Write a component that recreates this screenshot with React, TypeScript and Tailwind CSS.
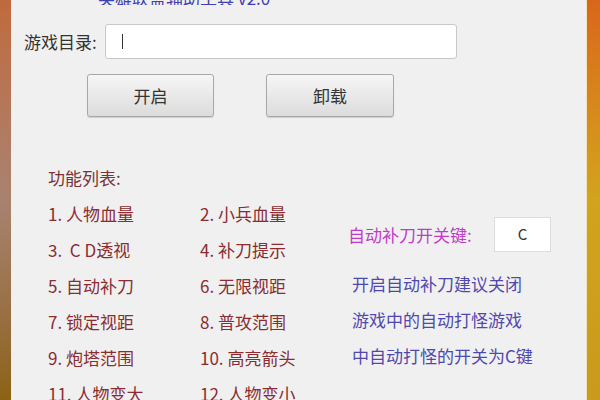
import React from 'react'

const cn = '"Noto Sans CJK SC", "Liberation Sans", sans-serif'

const features: [string, string][] = [
  ['1. 人物血量', '2. 小兵血量'],
  ['3.  C D透视', '4. 补刀提示'],
  ['5. 自动补刀', '6. 无限视距'],
  ['7. 锁定视距', '8. 普攻范围'],
  ['9. 炮塔范围', '10. 高亮箭头'],
  ['11. 人物变大', '12. 人物变小'],
]

const tips = ['开启自动补刀建议关闭', '游戏中的自动打怪游戏', '中自动打怪的开关为C键']

const App = () => {
  return (
    <div className="w-[600px] h-[400px] flex overflow-hidden" style={{ fontFamily: cn }}>
      {/* left frame */}
      <div className="w-[11px] h-full shrink-0 bg-gradient-to-b from-[#c06a3c] via-[#a88270] to-[#8c6210]" />
      <div className="w-[1px] h-full shrink-0 bg-[#f6ece4]" />

      {/* client area */}
      <div className="flex-1 h-full bg-[#f0f0f0] overflow-hidden">
        <div className="h-[5px] overflow-hidden pl-[86px]">
          <div className="-mt-[11px] text-[17px] leading-[18px] text-[#4040b0] whitespace-nowrap">
            英雄联盟辅助工具 v2.0
          </div>
        </div>

        <div className="flex items-center mt-[19px] pl-[12px] h-[35px]">
          <span className="text-[17px] text-[#333] w-[81px]">游戏目录:</span>
          <div className="w-[352px] h-[35px] bg-white border border-[#c8c8c8] rounded-[3px] flex items-center pl-[16px]">
            <div className="w-[1px] h-[15px] bg-[#333]" />
          </div>
        </div>

        <div className="flex gap-[52px] pl-[75px] mt-[15px]">
          <button className="w-[127px] h-[43px] rounded-[3px] border border-[#a8a8a8] bg-gradient-to-b from-[#f6f6f6] to-[#dcdcdc] text-[17px] text-[#333] shadow-[0_1px_1px_rgba(0,0,0,0.15)]">
            开启
          </button>
          <button className="w-[128px] h-[43px] rounded-[3px] border border-[#a8a8a8] bg-gradient-to-b from-[#f6f6f6] to-[#dcdcdc] text-[17px] text-[#333] shadow-[0_1px_1px_rgba(0,0,0,0.15)]">
            卸载
          </button>
        </div>

        <div className="flex mt-[43px]">
          <div className="pl-[36px] w-[336px] shrink-0 text-[17px] text-[#8a2c30]">
            <div className="h-[36px] leading-[36px] text-[#7a3436]">功能列表:</div>
            {features.map(([a, b]) => (
              <div key={a} className="flex h-[36px] leading-[36px] whitespace-pre">
                <span className="w-[152px]">{a}</span>
                <span>{b}</span>
              </div>
            ))}
          </div>

          <div className="flex flex-col pt-[57px]">
            <div className="flex items-center h-[35px]">
              <span className="text-[17px] text-[#c03cc8] w-[146px]">自动补刀开关键:</span>
              <div className="w-[57px] h-[35px] bg-white border border-[#dcdcdc] flex items-center justify-center text-[15px] text-[#333]">
                C
              </div>
            </div>
            <div className="mt-[14px] pl-[4px] text-[17px] text-[#4f48ae]">
              {tips.map((t) => (
                <div key={t} className="h-[36px] leading-[36px]">{t}</div>
              ))}
            </div>
          </div>
        </div>
      </div>

      {/* right frame */}
      <div className="w-[1px] h-full shrink-0 bg-[#f4e2bc]" />
      <div className="w-[13px] h-full shrink-0 bg-gradient-to-b from-[#d9661a] via-[#d2a41c] to-[#c99a1c]" />
    </div>
  )
}

export default App
